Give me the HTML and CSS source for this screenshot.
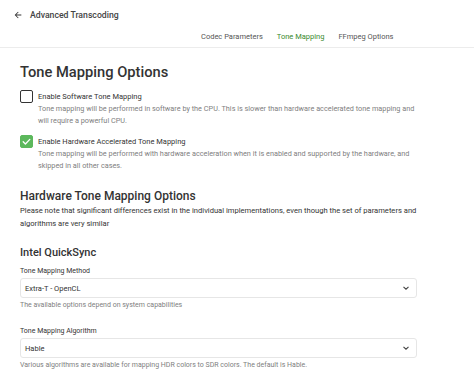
FILE: index.html
```html
<!DOCTYPE html>
<html>
<head>
<meta charset="utf-8">
<link rel="stylesheet" href="styles.css">
</head>
<body>
<div class="page">
  <header class="topbar">
    <div class="titlerow">
      <svg class="back" width="10" height="10" viewBox="0 0 24 24"><path d="M20 11H7.83l5.59-5.59L12 4l-8 8 8 8 1.41-1.41L7.83 13H20v-2z" fill="#333"/></svg>
      <span class="apptitle">Advanced Transcoding</span>
    </div>
    <nav class="tabs">
      <span class="tab">Codec Parameters</span>
      <span class="tab active">Tone Mapping</span>
      <span class="tab">FFmpeg Options</span>
    </nav>
  </header>
  <main class="content">
    <h1 class="h1">Tone Mapping Options</h1>
    <div class="check">
      <span class="box"></span>
      <div class="ctext">
        <div class="clabel">Enable Software Tone Mapping</div>
        <div class="cdesc">Tone mapping will be performed in software by the CPU. This is slower than hardware accelerated tone mapping and<br>will require a powerful CPU.</div>
      </div>
    </div>
    <div class="check">
      <span class="box on"><svg width="13" height="13" viewBox="0 0 13 13"><path d="M3.2 6.8l2.2 2.2 4.4-4.6" fill="none" stroke="#fff" stroke-width="1.3" stroke-linecap="round" stroke-linejoin="round"/></svg></span>
      <div class="ctext">
        <div class="clabel">Enable Hardware Accelerated Tone Mapping</div>
        <div class="cdesc">Tone mapping will be performed with hardware acceleration when it is enabled and supported by the hardware, and skipped in all other cases.</div>
      </div>
    </div>
    <h2 class="h2">Hardware Tone Mapping Options</h2>
    <p class="note">Please note that significant differences exist in the individual implementations, even though the set of parameters and algorithms are very similar</p>
    <h3 class="h3">Intel QuickSync</h3>
    <div class="field">
      <div class="flabel">Tone Mapping Method</div>
      <div class="select"><span>Extra-T - OpenCL</span><svg width="8" height="8" viewBox="0 0 8 8"><path d="M1.5 2.8L4 5.2 6.5 2.8" fill="none" stroke="#444" stroke-width="1.1"/></svg></div>
      <div class="fhelp">The available options depend on system capabilities</div>
    </div>
    <div class="field">
      <div class="flabel">Tone Mapping Algorithm</div>
      <div class="select"><span>Hable</span><svg width="8" height="8" viewBox="0 0 8 8"><path d="M1.5 2.8L4 5.2 6.5 2.8" fill="none" stroke="#444" stroke-width="1.1"/></svg></div>
      <div class="fhelp">Various algorithms are available for mapping HDR colors to SDR colors. The default is Hable.</div>
    </div>
  </main>
</div>
</body>
</html>
```
FILE: styles.css
```css
* { box-sizing: border-box; }
html, body { margin: 0; padding: 0; background: #fff; }
body { font-family: Roboto, "Liberation Sans", sans-serif; color: #333; }
.page { width: 474px; height: 372px; overflow: hidden; }
.topbar { border-bottom: 1px solid #ececec; height: 48px; }
.titlerow { display: flex; align-items: center; height: 30px; padding-left: 13px; }
.back { margin-right: 7px; }
.apptitle { font-size: 8.7px; font-weight: 500; color: #444; }
.tabs { display: flex; padding-left: 201px; gap: 14px; font-size: 7.5px; color: #555; line-height: 12px; margin-top: 1px; }
.tab.active { color: #3a8a2e; }
.content { padding: 14px 57px 0 20px; }
.h1 { margin: 0 0 8px; font-size: 14.7px; font-weight: 500; color: #333; line-height: 20px; }
.check { display: flex; gap: 5px; margin-bottom: 8px; }
.box { width: 13px; height: 13px; border: 1.5px solid #333; border-radius: 2px; flex: none; margin-top: 0; }
.box.on { background: #5cb85c; border-color: #5cb85c; display: flex; align-items: center; justify-content: center; }
.box.on svg { margin: -1.5px; }
.clabel { font-size: 7.5px; line-height: 12px; color: #333; margin-top: 1px; }
.cdesc { font-size: 7.3px; line-height: 12px; color: #808080; }
.h2 { margin: 16px 0 0; font-size: 12px; font-weight: 500; line-height: 16px; }
.note { margin: 0; font-size: 7.6px; line-height: 13px; color: #333; }
.h3 { margin: 16px 0 6px; font-size: 11px; font-weight: 500; line-height: 14px; }
.field { margin-bottom: 15px; }
.flabel { font-size: 7px; line-height: 10px; margin-bottom: 2px; }
.select { height: 20px; border: 1px solid #e6e6e6; border-radius: 3px; display: flex; align-items: center; justify-content: space-between; padding: 0 6px 0 4px; font-size: 7.5px; color: #333; }
.fhelp { font-size: 7px; line-height: 11px; color: #808080; margin-top: 2px; }
```
